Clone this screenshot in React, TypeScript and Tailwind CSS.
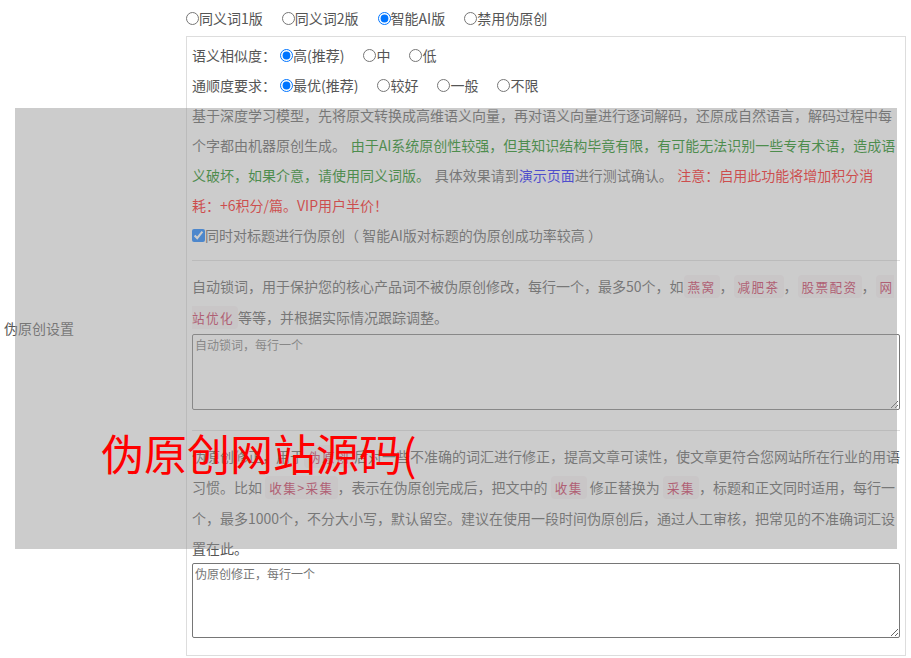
import React from 'react';

const Code = ({ children }: { children: React.ReactNode }) => (
    <code className="rounded-[4px] bg-[#f9f2f4] px-[4px] py-[2px] font-['Noto_Sans_CJK_SC',sans-serif] text-[12.6px] tracking-[1.4px] text-[#c7254e]">
        {children}
    </code>
);

const Radio = ({ name, label, checked = false }: { name: string; label: string; checked?: boolean }) => (
    <label className="inline-flex items-center">
        <input type="radio" name={name} defaultChecked={checked} className="m-0 h-[13px] w-[13px]" />
        <span>{label}</span>
    </label>
);

export default function App() {
    return (
        <div className="relative flex min-h-screen bg-white pb-[4px] font-['Noto_Sans_CJK_SC','Microsoft_YaHei',sans-serif] text-[14px] text-[#555]">
            {/* Left: label cell */}
            <div className="flex w-[186px] shrink-0 items-center pl-[4px]">伪原创设置</div>

            {/* Right: settings */}
            <div className="w-[720px] shrink-0">
                <div className="flex h-[36px] items-center gap-[19px]">
                    <Radio name="mode" label="同义词1版" />
                    <Radio name="mode" label="同义词2版" />
                    <Radio name="mode" label="智能AI版" checked />
                    <Radio name="mode" label="禁用伪原创" />
                </div>

                <div className="border border-[#ddd] px-[5px] pt-[3px] pb-[17px]">
                    <div className="flex h-[30px] items-center">
                        <span className="mr-[4px]">语义相似度：</span>
                        <div className="flex items-center gap-[19px]">
                            <Radio name="sim" label="高(推荐)" checked />
                            <Radio name="sim" label="中" />
                            <Radio name="sim" label="低" />
                        </div>
                    </div>
                    <div className="flex h-[30px] items-center">
                        <span className="mr-[4px]">通顺度要求：</span>
                        <div className="flex items-center gap-[19px]">
                            <Radio name="flu" label="最优(推荐)" checked />
                            <Radio name="flu" label="较好" />
                            <Radio name="flu" label="一般" />
                            <Radio name="flu" label="不限" />
                        </div>
                    </div>

                    <p className="leading-[30px] [word-spacing:1.5px]">
                        基于深度学习模型，先将原文转换成高维语义向量，再对语义向量进行逐词解码，还原成自然语言，解码过程中每个字都由机器原创生成。{' '}
                        <span className="text-[#008000]">
                            由于AI系统原创性较强，但其知识结构毕竟有限，有可能无法识别一些专有术语，造成语义破坏，如果介意，请使用同义词版。
                        </span>{' '}
                        具体效果请到<a href="#" className="text-[#0000ff]">演示页面</a>进行测试确认。{' '}
                        <span className="text-[#ff0000]">注意：启用此功能将增加积分消耗：+6积分/篇。VIP用户半价！</span>
                    </p>
                    <label className="flex h-[30px] items-center">
                        <input type="checkbox" defaultChecked className="m-0 h-[13px] w-[13px]" />
                        <span>同时对标题进行伪原创（ 智能AI版对标题的伪原创成功率较高 ）</span>
                    </label>

                    <hr className="my-[10px] border-t border-[#ddd]" />

                    <p className="leading-[30px]">
                        自动锁词，用于保护您的核心产品词不被伪原创修改，每行一个，最多50个，如<Code>燕窝</Code>，<Code>减肥茶</Code>，<Code>股票配资</Code>，<Code>网站优化</Code>等等，并根据实际情况跟踪调整。
                    </p>
                    <textarea
                        placeholder="自动锁词，每行一个"
                        className="mt-[1px] mb-[20px] block h-[76px] w-full rounded-[2px] border border-[#767676] px-[2px] py-[1px] text-[12px] placeholder:text-[#757575]"
                    />

                    <hr className="mb-[10px] border-t border-[#ddd]" />

                    <p className="leading-[30px]">
                        伪原创修正，用于<Code>伪原创</Code>后对一些不准确的词汇进行修正，提高文章可读性，使文章更符合您网站所在行业的用语习惯。比如 <Code>收集&gt;采集</Code>，表示在伪原创完成后，把文中的 <Code>收集</Code> 修正替换为 <Code>采集</Code>，标题和正文同时适用，每行一个，最多1000个，不分大小写，默认留空。建议在使用一段时间伪原创后，通过人工审核，把常见的不准确词汇设置在此。
                    </p>
                    <textarea
                        placeholder="伪原创修正，每行一个"
                        className="block h-[75px] w-full rounded-[2px] border border-[#767676] px-[2px] py-[1px] text-[12px] placeholder:text-[#757575]"
                    />
                </div>
            </div>

            {/* Overlay */}
            <div className="pointer-events-none absolute top-[108px] left-[15px] h-[441px] w-[882px] bg-[#999999]/50" />
            <div className="pointer-events-none absolute top-[431px] left-[101px] text-[43px] leading-none whitespace-nowrap text-[#ff0000]">
                伪原创网站源码(
            </div>
        </div>
    );
}
